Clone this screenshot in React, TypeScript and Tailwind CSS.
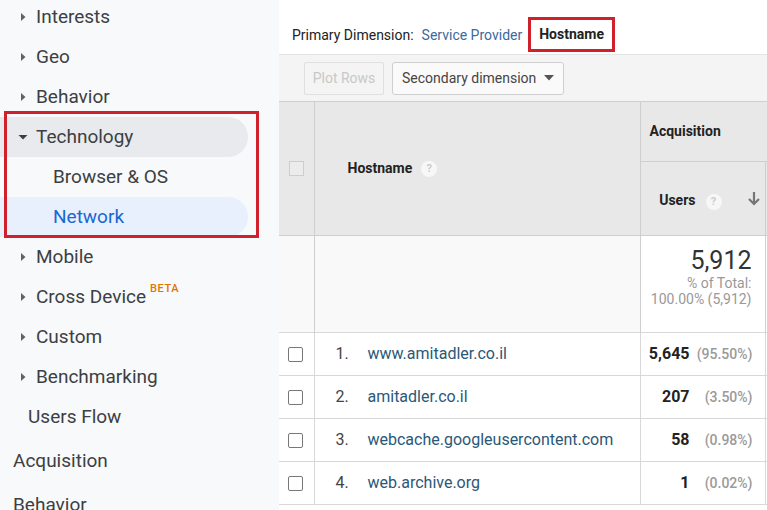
import React from 'react';

const sideFont = { fontFamily: 'Roboto, "Liberation Sans", sans-serif' };

const CaretRight = () => (
  <svg width="10" height="10" viewBox="0 0 10 10" className="shrink-0">
    <path d="M3 1v8l4.5-4z" fill="#5f6368" />
  </svg>
);

const CaretDown = () => (
  <svg width="10" height="10" viewBox="0 0 10 10" className="shrink-0">
    <path d="M0.5 3h9L5 7.5z" fill="#3c4043" />
  </svg>
);

const Help = () => (
  <span className="inline-flex h-[16px] w-[16px] items-center justify-center rounded-full bg-[#f7f7f7] text-[11px] font-bold leading-none text-[#cccccc]">
    ?
  </span>
);

const Checkbox = () => (
  <span className="block h-[15px] w-[15px] rounded-[2px] border border-[#777] bg-white" />
);

interface NavItemProps {
  label: string;
  caret?: 'right' | 'down';
  indent?: string;
  className?: string;
  badge?: string;
}

const NavItem: React.FC<NavItemProps> = ({ label, caret, indent = 'pl-[18px]', className = '', badge }) => (
  <div className={`flex h-10 items-center ${indent} ${className}`}>
    {caret && (
      <span className="mr-[8px] flex w-[10px] items-center">
        {caret === 'down' ? <CaretDown /> : <CaretRight />}
      </span>
    )}
    <span>{label}</span>
    {badge && (
      <span className="ml-[4px] -mt-[15px] text-[11px] font-medium tracking-[0.6px] text-[#e37400]">{badge}</span>
    )}
  </div>
);

const rows = [
  { n: 1, host: 'www.amitadler.co.il', users: '5,645', pct: '(95.50%)' },
  { n: 2, host: 'amitadler.co.il', users: '207', pct: '(3.50%)' },
  { n: 3, host: 'webcache.googleusercontent.com', users: '58', pct: '(0.98%)' },
  { n: 4, host: 'web.archive.org', users: '1', pct: '(0.02%)' },
];

export default function App() {
  return (
    <div className="flex h-[510px] w-[767px] overflow-hidden bg-white" style={sideFont}>
      {/* sidebar */}
      <div className="relative h-full w-[279px] shrink-0 overflow-hidden bg-[#f8f9fa] text-[19px] text-[#3c4043]">
        <div className="-mt-[3px]">
          <NavItem label="Interests" caret="right" />
          <NavItem label="Geo" caret="right" />
          <NavItem label="Behavior" caret="right" />
          <NavItem label="Technology" caret="down" className="w-[248px] rounded-r-full bg-[#e8eaed]" />
          <NavItem label="Browser & OS" indent="pl-[53px]" />
          <NavItem label="Network" indent="pl-[53px]" className="w-[248px] rounded-r-full bg-[#e8f0fe] text-[#1967d2]" />
          <NavItem label="Mobile" caret="right" />
          <NavItem label="Cross Device" caret="right" badge="BETA" />
          <NavItem label="Custom" caret="right" />
          <NavItem label="Benchmarking" caret="right" />
          <NavItem label="Users Flow" indent="pl-[28px]" />
          <div className="flex h-12 items-center pl-[13px]">Acquisition</div>
          <div className="flex h-10 items-center pl-[13px]">Behavior</div>
        </div>
        <div className="absolute left-[4px] top-[111px] h-[127px] w-[255px] border-[3px] border-[#d0202b]" />
      </div>

      {/* report */}
      <div className="flex min-w-0 flex-1 flex-col overflow-hidden">
        <div className="flex h-[54px] shrink-0 items-end pb-[2px] pl-[13px] text-[14px]">
          <span className="mb-[6px] text-[#222]">Primary Dimension:</span>
          <span className="mb-[6px] ml-[8px] text-[#3b6aa0]">Service Provider</span>
          <span className="ml-[6px] flex h-[35px] items-center border-[3px] border-[#d0202b] px-[8px] font-bold text-[#222]">
            Hostname
          </span>
        </div>

        <div className="flex h-[47px] shrink-0 items-center gap-[8px] border-t border-[#e4e4e4] bg-[#f4f4f4] pl-[25px]">
          <button className="h-[33px] w-[80px] rounded-[2px] border border-[#e0e0e0] bg-[#f4f4f4] text-[14px] text-[#c8c8c8]">
            Plot Rows
          </button>
          <button className="flex h-[33px] w-[172px] items-center justify-between rounded-[3px] border border-[#cfcfcf] bg-[#fafafa] pl-[9px] pr-[9px] text-[14px] text-[#444]">
            <span>Secondary dimension</span>
            <svg width="10" height="6" viewBox="0 0 10 6">
              <path d="M0 0h10L5 5.5z" fill="#555" />
            </svg>
          </button>
        </div>

        <table className="w-[540px] shrink-0 table-fixed border-collapse">
          <colgroup>
            <col className="w-[35px]" />
            <col className="w-[326px]" />
            <col className="w-[125px]" />
            <col className="w-[54px]" />
          </colgroup>
          <thead>
            <tr className="h-[60px] bg-[#e8e8e8]">
              <th rowSpan={2} className="border-r border-t border-[#cfcfcf] p-0 align-middle">
                <span className="ml-[10px] block h-[15px] w-[15px] border border-[#cdcdcd] bg-[#ececec]" />
              </th>
              <th rowSpan={2} className="border-r border-t border-[#cfcfcf] pl-[33px] text-left text-[14px] font-bold text-[#222]">
                <span className="flex items-center gap-[9px]">
                  Hostname <Help />
                </span>
              </th>
              <th colSpan={2} className="border-t border-[#cfcfcf] pl-[9px] text-left text-[14px] font-bold text-[#222]">
                Acquisition
              </th>
            </tr>
            <tr className="h-[74px] bg-[#e8e8e8]">
              <th className="border-r border-t border-[#cfcfcf] pr-[4px] text-[14px] font-bold text-[#222]">
                <span className="flex items-center justify-end">
                  <span className="pt-[4px]">Users</span>
                  <span className="ml-[10px] pt-[4px]">
                    <Help />
                  </span>
                  <svg width="14" height="16" viewBox="0 0 14 16" className="ml-[25px]">
                    <path d="M7 1v12M2 8l5 5 5-5" stroke="#757575" strokeWidth="2.2" fill="none" />
                  </svg>
                </span>
              </th>
              <th className="border-t border-[#cfcfcf]" />
            </tr>
          </thead>
          <tbody>
            <tr className="h-[97px]">
              <td className="border-r border-t border-[#cfcfcf] bg-[#f9f9f9]" />
              <td className="border-r border-t border-[#cfcfcf] bg-[#f9f9f9]" />
              <td className="border-r border-t border-[#cfcfcf] bg-white pr-[13px] pt-[11px] text-right align-top">
                <div className="text-[25px] leading-[28px] text-[#333]">5,912</div>
                <div className="text-[14px] leading-[16px] text-[#999]">% of Total:</div>
                <div className="text-[14px] leading-[16px] text-[#999]">100.00% (5,912)</div>
              </td>
              <td className="border-t border-[#cfcfcf] bg-white" />
            </tr>
            {rows.map((r) => (
              <tr key={r.n} className="h-[43px]">
                <td className="border-r border-t border-[#d8d8d8] p-0">
                  <span className="ml-[9px] block">
                    <Checkbox />
                  </span>
                </td>
                <td className="border-r border-t border-[#d8d8d8] pl-[21px] text-[16px]">
                  <span className="inline-block w-[32px] text-[#444]">{r.n}.</span>
                  <span className="text-[#2a5878]">{r.host}</span>
                </td>
                <td className="border-r border-t border-[#d8d8d8] pr-[12px]">
                  <div className="flex items-baseline justify-end">
                    <span className="text-[16px] font-bold text-[#222]">{r.users}</span>
                    <span className="w-[63px] text-right text-[14px] font-medium text-[#9a9a9a]">{r.pct}</span>
                  </div>
                </td>
                <td className="border-t border-[#d8d8d8]" />
              </tr>
            ))}
            <tr className="h-[8px]">
              <td className="border-t border-[#d8d8d8]" colSpan={4} />
            </tr>
          </tbody>
        </table>
      </div>
    </div>
  );
}
